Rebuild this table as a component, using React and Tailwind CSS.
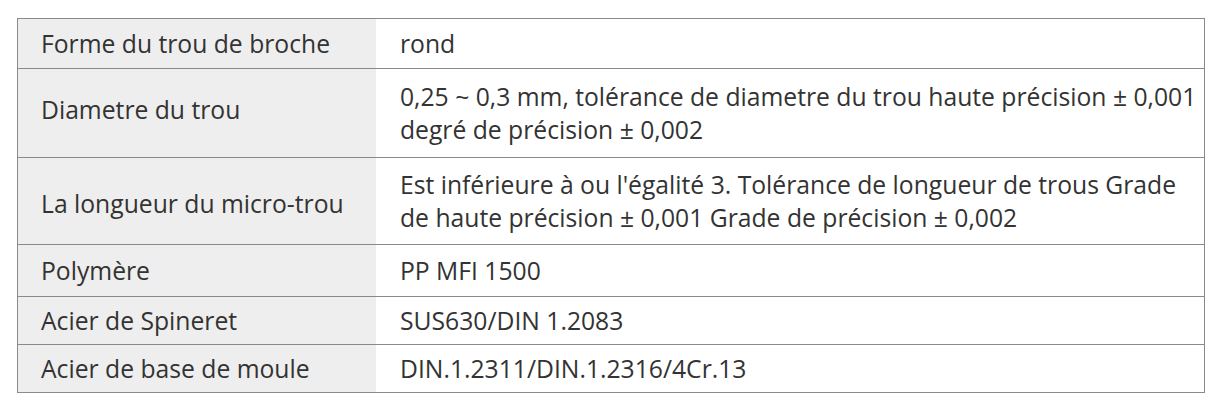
const rows = [
  { k: 'Forme du trou de broche', v: ['rond'], h: 'h-[49px]', kp: '' },
  {
    k: 'Diametre du trou',
    v: ['0,25 ~ 0,3 mm, tolérance de diametre du trou haute précision ± 0,001', 'degré de précision ± 0,002'],
    h: 'h-[89px]',
    kp: 'pb-[8px]',
  },
  {
    k: 'La longueur du micro-trou',
    v: ["Est inférieure à ou l'égalité 3. Tolérance de longueur de trous Grade", 'de haute précision ± 0,001 Grade de précision ± 0,002'],
    h: 'h-[87px]',
    kp: 'pt-[4px]',
  },
  { k: 'Polymère', v: ['PP MFI 1500'], h: 'h-[52px]', kp: '' },
  { k: 'Acier de Spineret', v: ['SUS630/DIN 1.2083'], h: 'h-[48px]', kp: '' },
  { k: 'Acier de base de moule', v: ['DIN.1.2311/DIN.1.2316/4Cr.13'], h: 'h-[48px]', kp: '' },
]

export default function App() {
  return (
    <div className="w-[1222px] h-[407px] bg-white pt-[18px] pl-[17px]" style={{ fontFamily: '"Open Sans", sans-serif' }}>
      <div className="w-[1188px] border border-[#8a8a8a] text-[#333] text-[24.7px] leading-[33px]">
        {rows.map(({ k, v, h, kp }, i) => (
          <div key={k} className={`flex ${h} ${i > 0 ? 'border-t border-[#8a8a8a]' : ''}`}>
            <div className={`w-[358px] shrink-0 bg-[#eeeeee] flex items-center pl-[23px] ${kp}`}>{k}</div>
            <div className="flex-1 flex flex-col justify-center pl-[24px] whitespace-nowrap">
              {v.map((line) => (
                <div key={line}>{line}</div>
              ))}
            </div>
          </div>
        ))}
      </div>
    </div>
  )
}
